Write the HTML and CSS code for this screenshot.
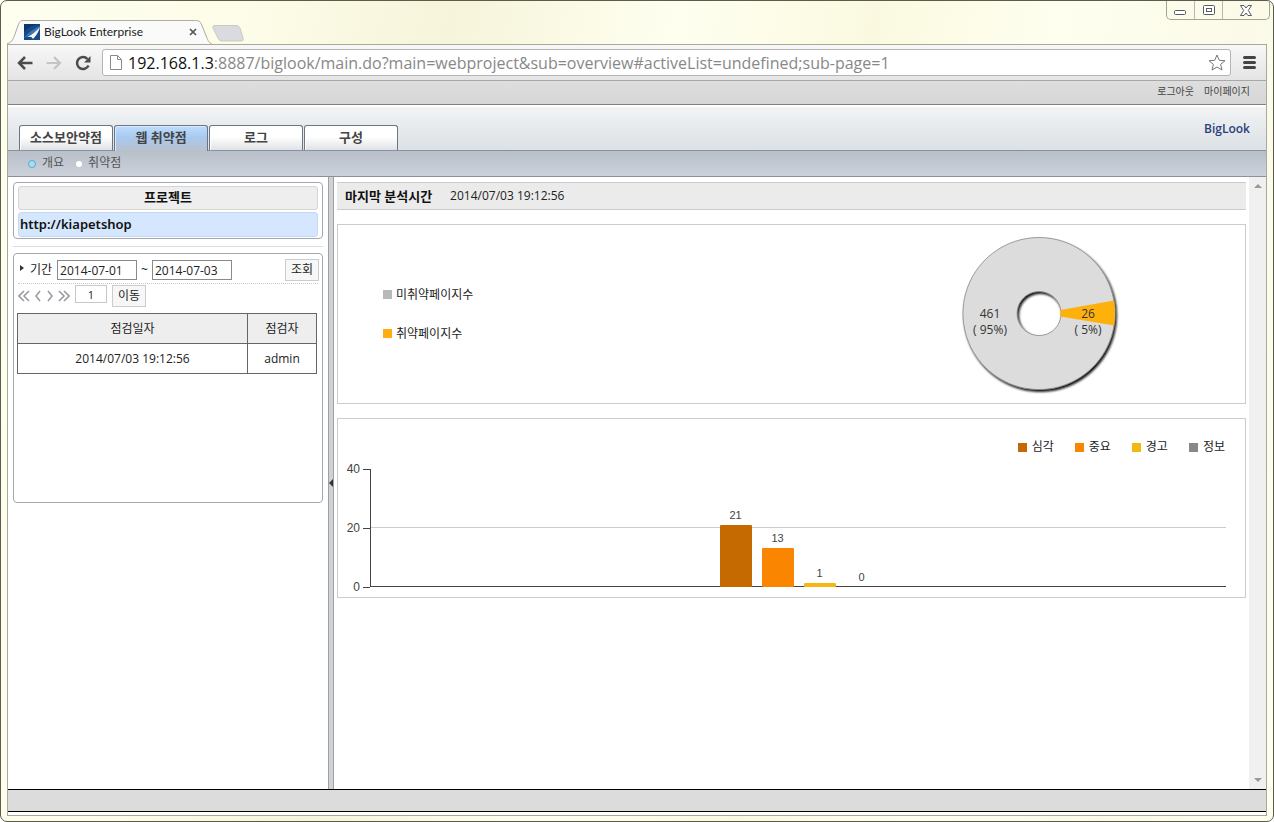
FILE: index.html
```html
<!DOCTYPE html>
<html lang="ko">
<head>
<meta charset="utf-8">
<meta name="viewport" content="width=device-width, initial-scale=1">
<title>BigLook Enterprise</title>
<link rel="stylesheet" href="styles.css">
</head>
<body>
<div class="window">
  <header class="titlebar">
    <div class="browser-tab">
      <svg class="tab-shape" viewBox="0 0 210 25" preserveAspectRatio="none" aria-hidden="true">
        <path d="M0 24.500C4 24 5 22 7 18L12 4C13 1.500 14 .5 17 .5H193C196 .5 198 1.500 199 4L205 19C206.500 23 208 24.500 210 24.500" fill="#fafafa" stroke="#a9a99a"/>
      </svg>
      <svg class="favicon" viewBox="0 0 16 16" aria-hidden="true">
        <rect width="16" height="16" fill="#174a8b"/>
        <path d="M0 8Q6 1 16 0H0Z" fill="#103568"/>
        <path d="M0 14Q6 6 16 2L14 8Q8 9 0 14Z" fill="#3d75b5"/>
        <path d="M3 13Q10 10 16 3Q14 10 9 15Q8 12 3 13Z" fill="#f4f8fc"/>
      </svg>
      <span class="tab-title">BigLook Enterprise</span>
      <button class="tab-close" aria-label="Close tab"><svg viewBox="0 0 8 8" width="8" height="8"><path d="M1 1L7 7M7 1L1 7" stroke="#555" stroke-width="1.700"/></svg></button>
    </div>
    <button class="new-tab" aria-label="New tab"><svg viewBox="0 0 32 17" width="32" height="17"><path d="M3 .5H24Q27 .5 28 3L31 13Q32 16 29 16H10Q7 16 6 13L1 3Q0 .5 3 .5Z" fill="#d9dbde" stroke="#c9cac4"/></svg></button>
    <div class="window-buttons">
      <button class="minimize" aria-label="Minimize"><svg viewBox="0 0 13 6" width="13" height="6"><rect x=".5" y=".5" width="11" height="4" rx="1" fill="#fff" stroke="#555a65"/></svg></button>
      <button aria-label="Maximize"><svg viewBox="0 0 12 10" width="12" height="10"><rect x=".5" y=".5" width="11" height="9" rx="1" fill="#fff" stroke="#555a65"/><rect x="3.500" y="3.500" width="5" height="3" fill="none" stroke="#555a65"/></svg></button>
      <button class="wide" aria-label="Close"><svg viewBox="0 0 12 11" width="12" height="11"><path d="M.5.5H4L6 3L8 .5H11.500L8.300 5.500L11.500 10.500H8L6 8L4 10.500H.5L3.700 5.500Z" fill="#fff" stroke="#555a65"/></svg></button>
    </div>
  </header>

  <div class="frame">
    <div class="toolbar">
      <button class="tool" aria-label="Back"><svg viewBox="0 0 16 14" width="16" height="14"><path d="M8 1L2 7L8 13M2 7H15.500" fill="none" stroke="#4c4c4c" stroke-width="2.500"/></svg></button>
      <button class="tool" aria-label="Forward"><svg viewBox="0 0 16 14" width="16" height="14"><path d="M8 1L14 7L8 13M14 7H.5" fill="none" stroke="#c4c4c4" stroke-width="2.200"/></svg></button>
      <button class="tool" aria-label="Reload"><svg viewBox="0 0 16 16" width="16" height="16"><path d="M12.500 4A6 6 0 1 0 13.500 10.500" fill="none" stroke="#4c4c4c" stroke-width="2.500"/><path d="M15.500 1V7.500H9Z" fill="#4c4c4c"/></svg></button>
      <div class="address">
        <svg viewBox="0 0 12 15" width="12" height="15" aria-hidden="true"><path d="M.5.5H7.500L11.500 4.500V14.500H.5ZM7.500.5V4.500H11.500" fill="#fff" stroke="#8a8a8a"/></svg>
        <a class="url" href="#"><span class="host">192.168.1.3</span>:8887/biglook/main.do?main=webproject&amp;sub=overview#activeList=undefined;sub-page=1</a>
        <button class="tool" aria-label="Bookmark"><svg viewBox="0 0 18 17" width="18" height="17"><path d="M9 1L11.300 6.300L17 6.700L12.600 10.400L14 16L9 13L4 16L5.400 10.400L1 6.700L6.700 6.300Z" fill="#fff" stroke="#777"/></svg></button>
      </div>
      <button class="tool" aria-label="Menu"><svg viewBox="0 0 13 13" width="13" height="13"><path d="M1.500 1.500H11.500M1.500 6.500H11.500M1.500 11.500H11.500" stroke="#444" stroke-width="3" stroke-linecap="round"/></svg></button>
    </div>

    <div class="account"><a href="#">로그아웃</a><a href="#">마이페이지</a></div>

    <div class="masthead">
      <nav class="main-nav">
        <a href="#">소스보안약점</a><a class="active" href="#">웹 취약점</a><a href="#">로그</a><a href="#">구성</a>
      </nav>
      <a class="brand" href="#">BigLook</a>
    </div>
    <nav class="sub-nav"><a class="on" href="#">개요</a><a href="#">취약점</a></nav>

    <div class="workspace">
      <aside class="sidebar">
        <section class="project box">
          <h2>프로젝트</h2>
          <a href="#">http://kiapetshop</a>
        </section>
        <hr class="divider">
        <section class="history box">
          <form class="filter">
            <label for="from">기간</label>
            <input id="from" type="text" value="2014-07-01">
            <label class="tilde" for="to">~</label>
            <input id="to" type="text" value="2014-07-03">
            <button class="btn" type="button">조회</button>
          </form>
          <div class="pager">
            <button class="page-arrow" aria-label="First"><svg viewBox="0 0 12 12" width="12" height="12"><path d="M6 1L1 6L6 11M11 1L6 6L11 11"/></svg></button>
            <button class="page-arrow" aria-label="Previous"><svg viewBox="0 0 8 12" width="8" height="12"><path d="M6 1L2 6L6 11"/></svg></button>
            <button class="page-arrow" aria-label="Next"><svg viewBox="0 0 8 12" width="8" height="12"><path d="M2 1L6 6L2 11"/></svg></button>
            <button class="page-arrow" aria-label="Last"><svg viewBox="0 0 12 12" width="12" height="12"><path d="M1 1L6 6L1 11M6 1L11 6L6 11"/></svg></button>
            <input type="text" value="1" aria-label="Page">
            <button class="btn" type="button">이동</button>
          </div>
          <table>
            <thead><tr><th>점검일자</th><th class="who">점검자</th></tr></thead>
            <tbody><tr><td>2014/07/03 19:12:56</td><td>admin</td></tr></tbody>
          </table>
        </section>
      </aside>

      <div class="splitter"><svg viewBox="0 0 4 8" width="4" height="8" aria-hidden="true"><path d="M4 0V8L0 4Z" fill="#333"/></svg></div>

      <main class="content">
        <div class="last-run"><strong>마지막 분석시간</strong><span>2014/07/03 19:12:56</span></div>

        <section class="panel pages">
          <ul class="page-legend">
            <li class="safe">미취약페이지수</li>
            <li class="weak">취약페이지수</li>
          </ul>
          <svg class="donut" viewBox="0 0 160 160" width="160" height="160" role="img" aria-label="461 / 26">
            <defs>
              <filter id="shade" x="-10%" y="-10%" width="120%" height="120%"><feDropShadow dx="1.500" dy="2" stdDeviation="1" flood-color="#111" flood-opacity="1"/></filter>
            </defs>
            <path d="M80 3.500A76 76 0 1 1 79.900 3.500ZM80 57.500A22 22 0 1 0 80.100 57.500Z" fill="#dcdcdc" fill-rule="evenodd" stroke="#888" stroke-width=".8" filter="url(#shade)"/>
            <path d="M101.500 76L155 66.500A76 76 0 0 1 155 91.500L101.500 82.500Z" fill="#feb10a"/>
            <g class="donut-text"><text x="31" y="84">461</text><text x="31" y="100">( 95%)</text><text x="129" y="84">26</text><text x="129" y="100">( 5%)</text></g>
          </svg>
        </section>

        <section class="panel severity">
          <ul class="severity-legend">
            <li class="critical">심각</li><li class="major">중요</li><li class="warning">경고</li><li class="info">정보</li>
          </ul>
          <div class="chart">
            <div class="y-axis"><span>40</span><span>20</span><span>0</span></div>
            <div class="plot">
              <div class="bar critical"><span>21</span><i style="height:62px"></i></div>
              <div class="bar major"><span>13</span><i style="height:39px"></i></div>
              <div class="bar warning"><span>1</span><i style="height:4px"></i></div>
              <div class="bar info"><span>0</span><i style="height:0"></i></div>
            </div>
          </div>
        </section>
      </main>

      <div class="scrollbar" aria-hidden="true">
        <svg viewBox="0 0 8 4" width="8" height="4"><path d="M0 4L4 0L8 4Z" fill="#999"/></svg>
        <svg viewBox="0 0 8 4" width="8" height="4"><path d="M0 0L4 4L8 0Z" fill="#999"/></svg>
      </div>
    </div>
    <footer class="footer"></footer>
  </div>
</div>
</body>
</html>
```
FILE: styles.css
```css
* { box-sizing: border-box; }
body { margin: 0; background: #fff; color: #222; font: 12px/16px "Open Sans", "Noto Sans CJK KR", sans-serif; }
a { color: inherit; text-decoration: none; }
button, input { font: inherit; color: inherit; margin: 0; }
button { padding: 0; border: 0; background: none; }
ul { list-style: none; margin: 0; padding: 0; }
svg { display: block; flex: none; }

.window {
  display: flex; flex-direction: column; min-height: 100vh;
  padding: 0 6px 5px; border: 1px solid #5c5c4c; border-radius: 7px;
  background: linear-gradient(100deg, #fffff0 0%, #fdfce8 18%, #f6f4da 32%, #fffff0 48%, #faf9e0 62%, #fffff0 75%, #fbfae8 88%, #fffff0 100%);
}

.titlebar { display: flex; align-items: flex-end; height: 43px; }
.browser-tab { position: relative; display: flex; align-items: center; width: 205px; height: 24px; padding: 0 10px 0 17px; }
.tab-shape { position: absolute; inset: 0; width: 100%; height: 100%; }
.favicon { position: relative; width: 16px; height: 16px; }
.tab-title { position: relative; flex: 1; margin-left: 4px; font-family: Lato, sans-serif; }
.tab-close { position: relative; padding: 4px 2px; margin-right: 3px; }
.new-tab { align-self: flex-start; margin-top: 24px; }
.window-buttons { display: flex; align-self: flex-start; margin-left: auto; margin-right: -3px; height: 19px; border: 1px solid #a4a494; border-top: 0; border-radius: 0 0 5px 5px; }
.window-buttons button { display: grid; place-items: center; width: 28px; border-right: 1px solid #b8b8a8; }
.window-buttons .minimize { padding-top: 6px; }
.window-buttons .wide { width: 46px; border: 0; }

.frame { display: flex; flex-direction: column; flex: 1; border: 1px solid #a9a99a; padding-bottom: 3px; background: #fff; }
.toolbar { display: flex; align-items: center; gap: 12px; height: 36px; padding: 0 10px 0 9px; border-bottom: 1px solid #a8a8a8; background: linear-gradient(#f8f8f8, #e4e4e4); }
.tool { display: grid; place-items: center; }
.tool + .tool { margin-left: 1px; }
.address { display: flex; flex: 1; align-items: center; gap: 6px; min-width: 0; height: 27px; margin-left: -1px; padding: 0 4px 0 7px; border: 1px solid #b4b4b4; border-radius: 3px; background: #fff; }
.url { flex: 1; min-width: 0; overflow: hidden; white-space: nowrap; color: #888; font: 16px/24px "Open Sans", sans-serif; }
.host { color: #111; }

.account { display: flex; justify-content: flex-end; gap: 10px; height: 24px; padding: 2px 16px 0; border-bottom: 1px solid #808080; background: linear-gradient(#dedede, #d6d6d6); color: #444; font-size: 10px; }

.masthead { display: flex; align-items: flex-end; justify-content: space-between; height: 46px; padding: 0 16px 0 11px; border-top: 2px solid #fff; border-bottom: 1px solid #8c929c; background: linear-gradient(#f1f3f5, #dce1e5); }
.main-nav { display: flex; gap: 1px; }
.main-nav a { width: 94px; height: 25px; border: 1px solid #6d7482; border-bottom: 0; border-radius: 3px 3px 0 0; background: linear-gradient(#fff 45%, #dfe2e6); box-shadow: inset 1px 1px #fff; text-align: center; font-size: 13px; line-height: 22px; font-weight: 600; color: #444; }
.main-nav .active { height: 26px; margin-bottom: -1px; background: linear-gradient(#bcdcff, #a9c9ef 45%, #b9c0cb); box-shadow: inset 1px 1px #d9ebff; }
.brand { align-self: center; color: #2a3f7c; font: 600 12px/20px "Open Sans", sans-serif; }
.sub-nav { display: flex; gap: 12px; height: 26px; padding: 4px 20px; border-bottom: 1px solid #8c929c; background: linear-gradient(#b7bfc9, #cdd2da); color: #555; }
.sub-nav a { display: flex; align-items: center; gap: 6px; height: 16px; }
.sub-nav a::before { content: ""; width: 6px; height: 6px; margin-top: 2px; border-radius: 50%; background: #fff; }
.sub-nav .on::before { background: #a9dcf5; border: 1px solid #5ba7cf; }

.workspace { display: flex; flex: 1; }
.sidebar { flex: none; width: 320px; padding: 5px; }
.box { border: 1px solid #a3a7b0; border-radius: 4px; padding: 3px 4px 1px; background: #fff; }
.project h2 { margin: 0 0 2px; height: 24px; border: 1px solid #d5d5d5; border-radius: 3px; background: #eee; text-align: center; font-size: 13px; line-height: 20px; font-weight: 700; color: #111; }
.project a { display: block; height: 25px; padding-left: 1px; border: 1px solid #c5daf2; border-radius: 3px; background: #d4e7ff; font-family: "Noto Sans", sans-serif; font-size: 13px; line-height: 23px; font-weight: 600; color: #111; }
.project { width: 310px; }
.divider { margin: 7px 0 6px; border: 0; border-top: 1px solid #ddd; }
.history { width: 310px; min-height: 250px; }
.filter { display: flex; align-items: center; height: 27px; border-bottom: 1px dotted #c8c8c8; }
.filter label::before { content: ""; display: inline-block; margin: 0 6px 3px 2px; border: 3px solid transparent; border-left: 4px solid #333; border-right: 0; }
.filter .tilde { margin: 0 4px; }
.filter .tilde::before { display: none; }
.filter input { width: 80px; height: 20px; padding: 0 2px; border: 1px solid #8a8a8a; background: #fff; }
.filter label + input { margin-left: 5px; }
.filter .tilde + input { margin-left: 0; }
.filter .btn { margin-left: auto; margin-right: -1px; }
.btn { width: 34px; height: 22px; border: 1px solid #ccc; background: #f7f7f7; line-height: 18px; }
.pager { display: flex; align-items: center; gap: 4px; height: 24px; }
.page-arrow path { fill: none; stroke: #999ca2; stroke-width: 1.6; }
.pager input { width: 32px; height: 18px; margin: -4px 1px 0; padding: 0; border: 1px solid #c8c8c8; text-align: center; font-size: 11px; }
.page-arrow { width: 12px; }
.page-arrow:nth-child(2), .page-arrow:nth-child(3) { width: 8px; }
table { width: 300px; margin: 5px 0 0 -1px; border-collapse: collapse; table-layout: fixed; text-align: center; }
th, td { height: 30px; padding: 0; border: 1px solid #666; font-weight: 400; }
th { background: #eee; }
.who { width: 69px; }

.splitter { display: flex; align-items: center; flex: none; width: 6px; border: solid #9da1a6; border-width: 0 1px; background: #d0d2d5; }
.content { flex: 1; min-width: 0; padding: 5px 3px; }
.last-run { display: flex; gap: 18px; height: 28px; padding: 0 8px; align-items: center; border: 1px solid #ccc; border-width: 1px 0; background: #ebebeb; }
.last-run strong { font-size: 13px; color: #111; }
.panel { margin-top: 14px; height: 180px; border: 1px solid #ccc; }
.pages { display: grid; grid-template-columns: 6fr 5fr; align-items: center; }
.donut { justify-self: center; }
.donut-text { font: 12px "Open Sans", sans-serif; fill: #333; text-anchor: middle; }
.page-legend { display: grid; gap: 23px; padding-left: 45px; }
li { display: flex; align-items: center; }
li::before { content: ""; width: 9px; height: 9px; margin-right: 4px; background: #b9b9b9; }
.weak::before { background: #feae12; }

.severity { padding: 20px 19px 0 8px; }
.severity-legend { display: flex; justify-content: flex-end; gap: 21px; padding-right: 1px; }
.severity-legend li::before { margin-right: 5px; }
.critical { --fill: #c46a00; }
.major { --fill: #fa8500; }
.warning { --fill: #f3b812; }
.info { --fill: #888; }
.severity-legend li::before { background: var(--fill); }
.chart { display: flex; margin-top: 14px; font-family: "Liberation Sans", sans-serif; color: #444; }
.y-axis { display: flex; flex-direction: column; justify-content: space-between; flex: none; width: 24px; height: 134px; margin: -8px 0; }
.y-axis span { display: flex; align-items: center; justify-content: flex-end; }
.y-axis span::after { content: ""; width: 7px; height: 1px; margin-left: 3px; background: #444; }
.plot { display: flex; flex: 1; align-items: flex-end; justify-content: center; gap: 10px; height: 118px; border: solid #444; border-width: 0 0 1px 1px; background: linear-gradient(#ccc, #ccc) 0 58px / 100% 1px no-repeat; }
.bar { display: flex; flex-direction: column; align-items: center; width: 32px; font-size: 11px; line-height: 20px; }
.bar i { width: 100%; margin-bottom: -1px; border-radius: 1px; background: var(--fill); }

.scrollbar { display: flex; flex-direction: column; align-items: center; justify-content: space-between; flex: none; width: 17px; padding: 7px 0; background: #f0f0f0; }
.footer { height: 23px; border: solid #000; border-width: 1px 0; background: #dcdcdc; }
```
